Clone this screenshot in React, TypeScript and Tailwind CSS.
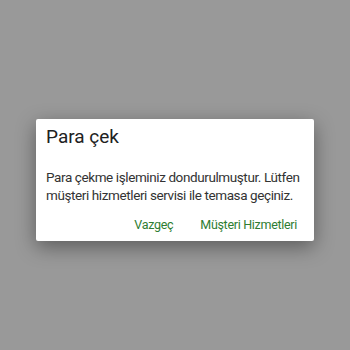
import React from 'react';

const App: React.FC = () => {
  return (
    <div className="w-[350px] h-[350px] bg-[#999999] flex items-start justify-center pt-[119px]" style={{ fontFamily: 'Roboto, sans-serif' }}>
      <div className="w-[278px] bg-white rounded-[2px] shadow-[0_6px_20px_rgba(0,0,0,0.4)] pl-[10px] pr-[8px] pt-[6px] pb-[8px] flex flex-col">
        <h2 className="text-[19px] leading-[24px] text-[#212121]">Para çek</h2>
        <p className="mt-[19px] text-[13.5px] leading-[18px] tracking-[-0.4px] text-[#333333]">
          Para çekme işleminiz dondurulmuştur. Lütfen müşteri hizmetleri servisi ile temasa geçiniz.
        </p>
        <div className="mt-[13px] flex justify-end gap-[27px] text-[12.5px] leading-[16px] tracking-[-0.3px] text-[#2e7d32] pr-[9px]">
          <button>Vazgeç</button>
          <button>Müşteri Hizmetleri</button>
        </div>
      </div>
    </div>
  );
};

export default App;
